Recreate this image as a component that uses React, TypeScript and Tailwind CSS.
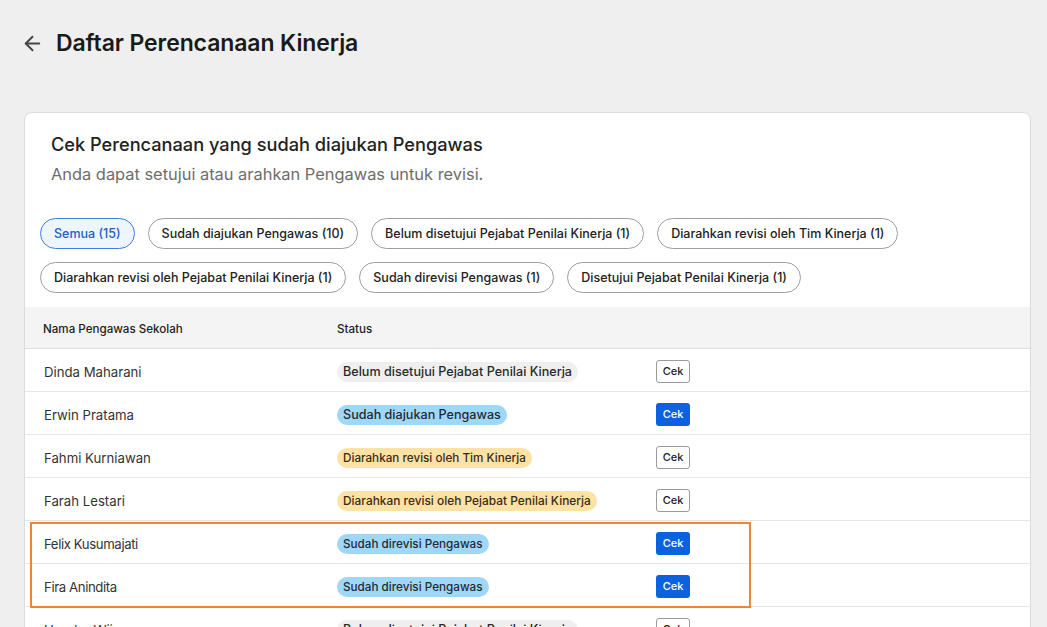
import React from "react";
import { ArrowLeft } from "lucide-react";

type Tone = "gray" | "blue" | "orange";
type Row = { name: string; status: string; tone: Tone; primary: boolean; fs: string; tight?: boolean };

const rows: Row[] = [
  { name: "Dinda Maharani", status: "Belum disetujui Pejabat Penilai Kinerja", tone: "gray", primary: false, fs: "text-[12.6px]" },
  { name: "Erwin Pratama", status: "Sudah diajukan Pengawas", tone: "blue", primary: true, fs: "text-[12.6px]" },
  { name: "Fahmi Kurniawan", status: "Diarahkan revisi oleh Tim Kinerja", tone: "orange", primary: false, fs: "text-[11.7px]" },
  { name: "Farah Lestari", status: "Diarahkan revisi oleh Pejabat Penilai Kinerja", tone: "orange", primary: false, fs: "text-[11.9px]" },
  { name: "Felix Kusumajati", status: "Sudah direvisi Pengawas", tone: "blue", primary: true, fs: "text-[11.7px]", tight: true },
  { name: "Fira Anindita", status: "Sudah direvisi Pengawas", tone: "blue", primary: true, fs: "text-[11.7px]", tight: true },
  { name: "Hendra Wijaya", status: "Belum disetujui Pejabat Penilai Kinerja", tone: "gray", primary: false, fs: "text-[12.6px]" },
];

const toneClass: Record<Tone, string> = {
  gray: "bg-[#efefef] text-[#2a2a2a]",
  blue: "bg-[#9fd7f7] text-[#1f2a33]",
  orange: "bg-[#fde2a6] text-[#3a2c10]",
};

const chipsRow1 = [
  "Semua (15)",
  "Sudah diajukan Pengawas (10)",
  "Belum disetujui Pejabat Penilai Kinerja (1)",
  "Diarahkan revisi oleh Tim Kinerja (1)",
];
const chipsRow2 = [
  "Diarahkan revisi oleh Pejabat Penilai Kinerja (1)",
  "Sudah direvisi Pengawas (1)",
  "Disetujui Pejabat Penilai Kinerja (1)",
];

function Chip({ label, active }: { label: string; active?: boolean }) {
  return (
    <button
      className={
        active
          ? "flex items-center h-[31px] px-[13px] pt-[1px] rounded-full border border-[#3d7fdc] bg-[#edf5ff] text-[#1f5fbf] text-[12.5px] font-medium leading-[16px]"
          : "flex items-center h-[31px] px-[13px] pt-[1px] rounded-full border border-[#9e9e9e] bg-white text-[#222] text-[12.5px] font-medium leading-[16px]"
      }
    >
      {label}
    </button>
  );
}

function TableRow({ r }: { r: Row }) {
  return (
    <div className="flex items-center h-[43px] border-b border-[#e6e6e6]">
      <div
        className={
          r.tight
            ? "w-[312px] pl-[19px] pt-[3px] text-[13.2px] leading-[20px] tracking-[-0.4px] text-[#333]"
            : "w-[312px] pl-[19px] pt-[3px] text-[13.2px] leading-[20px] text-[#333]"
        }
      >
        {r.name}
      </div>
      <div className="w-[319px]">
        <span className={`inline-flex items-center h-[20px] px-[6px] pt-[1px] rounded-full leading-[16px] font-medium ${r.fs} ${toneClass[r.tone]}`}>
          {r.status}
        </span>
      </div>
      <button
        className={
          r.primary
            ? "mt-[2px] w-[34px] h-[23px] rounded-[3px] bg-[#0a62e1] text-white text-[11px] font-medium"
            : "mt-[2px] w-[34px] h-[23px] rounded-[3px] border border-[#9a9a9a] bg-white text-[#222] text-[11px] font-medium"
        }
      >
        Cek
      </button>
    </div>
  );
}

export default function App() {
  return (
    <div
      className="h-[627px] overflow-hidden bg-[#efefef] pl-[24px] pr-[16px]"
      style={{ fontFamily: "Inter, 'Noto Sans', sans-serif" }}
    >
      <div className="flex items-center h-[30px] mt-[28px] -ml-[3px] gap-[12px]">
        <ArrowLeft size={23} strokeWidth={2} className="text-[#444]" />
        <h1 className="text-[23px] font-semibold text-[#1a1a1a] tracking-[-0.1px]">Daftar Perencanaan Kinerja</h1>
      </div>

      <div className="mt-[54px] bg-white rounded-[8px] border border-[#dcdcdc]">
        <div className="px-[26px] pt-[19px]">
          <h2 className="text-[18.2px] leading-[24px] font-medium text-[#222]">
            Cek Perencanaan yang sudah diajukan Pengawas
          </h2>
          <p className="mt-[6px] text-[16.4px] leading-[24px] text-[#6d6d6d]">
            Anda dapat setujui atau arahkan Pengawas untuk revisi.
          </p>
        </div>

        <div className="px-[15px] mt-[32px] flex flex-col gap-[13px]">
          <div className="flex gap-[13px]">
            {chipsRow1.map((c, i) => (
              <Chip key={c} label={c} active={i === 0} />
            ))}
          </div>
          <div className="flex gap-[13px]">
            {chipsRow2.map((c) => (
              <Chip key={c} label={c} />
            ))}
          </div>
        </div>

        <div className="mt-[14px]">
          <div className="flex items-center h-[42px] pt-[3px] bg-[#f4f4f4] border-b border-[#dedede] text-[11.6px] leading-[16px] font-medium text-[#222]">
            <div className="w-[312px] pl-[18px]">Nama Pengawas Sekolah</div>
            <div>Status</div>
          </div>
          {rows.slice(0, 4).map((r) => (
            <TableRow key={r.name} r={r} />
          ))}
          <div className="relative">
            {rows.slice(4, 6).map((r) => (
              <TableRow key={r.name} r={r} />
            ))}
            <div className="absolute left-[5px] top-[1px] w-[721px] h-[86px] border-2 border-[#e8873a] pointer-events-none" />
          </div>
          {rows.slice(6).map((r) => (
            <TableRow key={r.name} r={r} />
          ))}
        </div>
      </div>
    </div>
  );
}
